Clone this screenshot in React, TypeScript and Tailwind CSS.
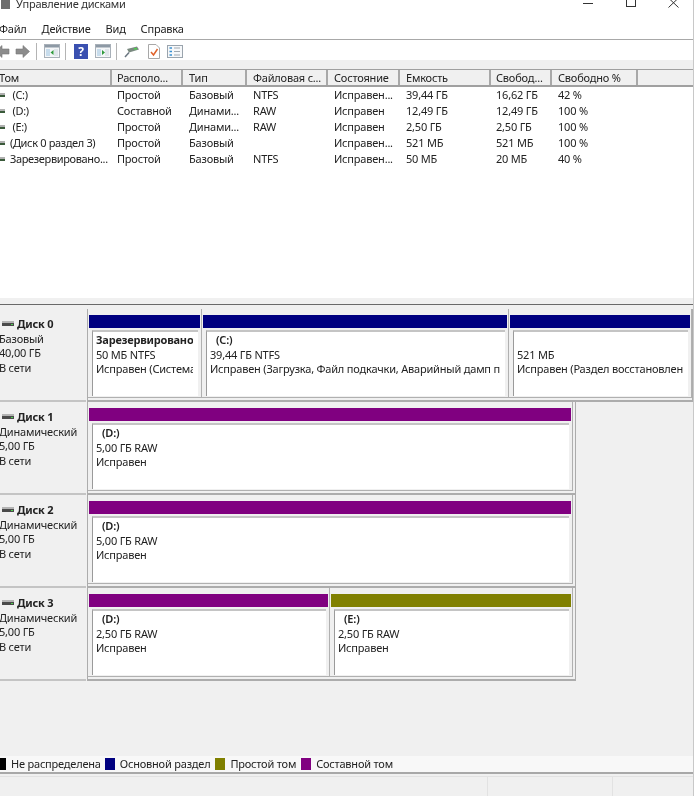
import type { ReactNode } from "react";

const cols = [
  { title: "Том", w: "w-[112px]", pad: "-indent-[1px]" },
  { title: "Располо...", w: "w-[71px]", pad: "pl-[5px]" },
  { title: "Тип", w: "w-[64px]", pad: "pl-[6px]" },
  { title: "Файловая с...", w: "w-[81px]", pad: "pl-[6px]" },
  { title: "Состояние", w: "w-[72px]", pad: "pl-[6px]" },
  { title: "Емкость", w: "w-[91px]", pad: "pl-[6px]" },
  { title: "Свобод...", w: "w-[61px]", pad: "pl-[5px]" },
  { title: "Свободно %", w: "w-[86px]", pad: "pl-[6px]" },
];

const volumes = [
  [" (C:)", "Простой", "Базовый", "NTFS", "Исправен...", "39,44 ГБ", "16,62 ГБ", "42 %"],
  [" (D:)", "Составной", "Динами...", "RAW", "Исправен", "12,49 ГБ", "12,49 ГБ", "100 %"],
  [" (E:)", "Простой", "Динами...", "RAW", "Исправен", "2,50 ГБ", "2,50 ГБ", "100 %"],
  ["(Диск 0 раздел 3)", "Простой", "Базовый", "", "Исправен...", "521 МБ", "521 МБ", "100 %"],
  ["Зарезервировано...", "Простой", "Базовый", "NTFS", "Исправен...", "50 МБ", "20 МБ", "40 %"],
];

type Part = { w: string; bar: string; name?: string; bold?: boolean; size: string; status: string };

const disks: { name: string; kind: string; size: string; width: string; parts: Part[] }[] = [
  {
    name: "Диск 0",
    kind: "Базовый",
    size: "40,00 ГБ",
    width: "w-[606px]",
    parts: [
      { w: "w-[114px]", bar: "bg-[#000080]", name: "Зарезервировано", bold: true, size: "50 МБ NTFS", status: "Исправен (Система" },
      { w: "w-[307px]", bar: "bg-[#000080]", name: "(C:)", size: "39,44 ГБ NTFS", status: "Исправен (Загрузка, Файл подкачки, Аварийный дамп п" },
      { w: "w-[183px]", bar: "bg-[#000080]", size: "521 МБ", status: "Исправен (Раздел восстановлен" },
    ],
  },
  {
    name: "Диск 1",
    kind: "Динамический",
    size: "5,00 ГБ",
    width: "w-[489px]",
    parts: [{ w: "w-[485px]", bar: "bg-[#800080]", name: "(D:)", size: "5,00 ГБ RAW", status: "Исправен" }],
  },
  {
    name: "Диск 2",
    kind: "Динамический",
    size: "5,00 ГБ",
    width: "w-[489px]",
    parts: [{ w: "w-[485px]", bar: "bg-[#800080]", name: "(D:)", size: "5,00 ГБ RAW", status: "Исправен" }],
  },
  {
    name: "Диск 3",
    kind: "Динамический",
    size: "5,00 ГБ",
    width: "w-[489px]",
    parts: [
      { w: "w-[242px]", bar: "bg-[#800080]", name: "(D:)", size: "2,50 ГБ RAW", status: "Исправен" },
      { w: "w-[243px]", bar: "bg-[#808000]", name: "(E:)", size: "2,50 ГБ RAW", status: "Исправен" },
    ],
  },
];

const legend = [
  { label: "Не распределена", color: "bg-black", ml: "-ml-[4px]" },
  { label: "Основной раздел", color: "bg-[#000080]", ml: "ml-[4px]" },
  { label: "Простой том", color: "bg-[#808000]", ml: "ml-[5px]" },
  { label: "Составной том", color: "bg-[#800080]", ml: "ml-[5px]" },
];

function DriveIcon() {
  return (
    <svg width="12" height="8" viewBox="0 0 12 8" className="shrink-0">
      <rect x="0" y="1" width="12" height="2" fill="#b4b4b4" />
      <rect x="0" y="3" width="12" height="3" fill="#4a4a4a" />
      <rect x="9" y="4" width="2" height="1" fill="#4fd04f" />
    </svg>
  );
}

function Win({ green, className }: { green?: boolean; className: string }) {
  return (
    <svg width="16" height="14" viewBox="0 0 16 14" className={`shrink-0 ${className}`}>
      <rect x="0.5" y="0.5" width="15" height="13" fill="#f4f6f8" stroke="#a8b0b8" />
      <rect x="1" y="1" width="14" height="2.5" fill="#8d99a5" />
      <rect x="2" y="5" width="4" height="7" fill="#c7dcec" />
      <rect x="10" y="5" width="4" height="7" fill="#dfe5ea" />
      <path d={green ? "M7 6 L10 8.5 L7 11 Z" : "M9.5 6 L6.5 8.5 L9.5 11 Z"} fill="#2f9a3c" />
    </svg>
  );
}

function Arrow({ flip }: { flip?: boolean }) {
  return (
    <svg width="15" height="13" viewBox="0 0 15 13" className={flip ? "shrink-0 -scale-x-100" : "shrink-0 ml-[5px]"}>
      <path d="M1 4 H8 V0.5 L14.5 6.5 L8 12.5 V9 H1 Z" fill="#8c8c8c" stroke="#777777" strokeWidth="0.6" />
    </svg>
  );
}

function Sep({ className }: { className: string }) {
  return <div className={`w-px h-[17px] bg-[#b4b4b4] shrink-0 ${className}`} />;
}

function Partition({ p }: { p: Part }) {
  return (
    <div className={`${p.w} shrink-0 h-[89px] flex flex-col border-r border-b border-[#b0b0b0]`}>
      <div className={`${p.bar} h-[13px] mt-[6px] mx-px shrink-0`} />
      <div className="mt-[2px] ml-[4px] mr-[3px] h-[66px] bg-white border-l border-t-2 border-l-[#9a9a9a] border-t-[#c4c4c4]">
        <div className="ml-[3px] mr-[5px] pt-[1px] whitespace-nowrap leading-[14.5px] overflow-hidden">
          <div className={`h-[14.5px] ${p.bold ? "font-bold" : "pl-[6px] font-semibold"}`}>{p.name ?? ""}</div>
          <div>{p.size}</div>
          <div>{p.status}</div>
        </div>
      </div>
    </div>
  );
}

function Cell({ children, className }: { children: ReactNode; className?: string }) {
  return <div className={`h-4 leading-4 whitespace-nowrap shrink-0 ${className ?? ""}`}>{children}</div>;
}

export default function App() {
  return (
    <div className="w-[696px] h-[796px] overflow-hidden bg-white text-[11px] tracking-[-0.2px] text-[#222222] blur-[0.3px] font-['Noto_Sans',sans-serif]">
      <div className="w-[694px] h-full bg-[#f0f0f0] border-r border-[#c8c8c8] flex flex-col">
        {/* title */}
        <div className="h-[20px] bg-white flex items-start shrink-0 overflow-hidden">
          <div className="flex items-center gap-[6px] -mt-[4px] h-4 pl-[1px] text-[#333333]">
            <div className="w-[9px] h-[10px] bg-[#6d6d6d] shrink-0" />
            <span>Управление дисками</span>
          </div>
          <div className="ml-auto flex items-start">
            <div className="w-[10px] h-px bg-[#333333] mt-[3px] mr-[33px]" />
            <div className="w-[10px] h-[7px] border border-t-0 border-[#333333] mr-[32px]" />
            <svg width="11" height="8" viewBox="0 0 11 8" className="mr-[14px]">
              <path d="M0.5 -2 L10.5 7.5 M10.5 -2 L0.5 7.5" stroke="#333333" fill="none" />
            </svg>
          </div>
        </div>
        {/* menu */}
        <div className="h-[20px] bg-white border-b border-[#a8a8a8] flex items-start shrink-0 -ml-[1px]">
          <div className="flex pt-[1px] h-4 leading-4 gap-[15px]">
            <span>Файл</span>
            <span>Действие</span>
            <span>Вид</span>
            <span>Справка</span>
          </div>
        </div>
        {/* toolbar */}
        <div className="h-[20px] pt-[2px] bg-white flex items-center shrink-0 -ml-[5px]">
          <Arrow flip />
          <Arrow />
          <Sep className="ml-[6px]" />
          <Win className="ml-[7px]" />
          <Sep className="ml-[5px]" />
          <div className="w-[14px] h-[15px] ml-[8px] bg-[#3a50b0] text-white font-bold text-[12px] leading-[15px] text-center shrink-0">?</div>
          <Win green className="ml-[7px]" />
          <Sep className="ml-[5px]" />
          <svg width="15" height="14" viewBox="0 0 15 14" className="shrink-0 ml-[7px]">
            <path d="M3 5 L13 2.5 L15 5.5 L5 8.5 Z" fill="#7a8a80" />
            <rect x="10" y="4" width="3" height="1.5" fill="#50d050" />
            <path d="M5 8.5 L1 13" stroke="#6a7680" strokeWidth="1.5" />
          </svg>
          <svg width="12" height="15" viewBox="0 0 12 15" className="shrink-0 ml-[9px]">
            <path d="M0.5 0.5 H8 L11.5 4 V14.5 H0.5 Z" fill="#ffffff" stroke="#a8a8a8" />
            <path d="M3 8 L5.5 11 L9.5 5" stroke="#e0622a" strokeWidth="1.5" fill="none" />
          </svg>
          <svg width="16" height="13" viewBox="0 0 16 13" className="shrink-0 ml-[7px]">
            <rect x="0.5" y="0.5" width="15" height="12" fill="#f6f8fa" stroke="#9aa4ad" />
            <path d="M2.5 3 H5 M2.5 6.5 H5 M2.5 10 H5" stroke="#3a8fd0" strokeWidth="1.5" />
            <path d="M7 3 H13 M7 6.5 H13 M7 10 H13" stroke="#a0a8b0" />
          </svg>
        </div>
        <div className="h-[9px] shrink-0" />
        {/* volume list */}
        <div className="h-[229px] shrink-0 bg-white">
          <div className="h-[18px] bg-[#f0f0f0] border-t border-b-2 border-[#a0a0a0] flex overflow-hidden">
            {cols.map((c) => (
              <div key={c.title} className={`${c.w} ${c.pad} shrink-0 h-full border-r-2 border-[#a8a8a8] leading-[16px] whitespace-nowrap`}>
                {c.title}
              </div>
            ))}
          </div>
          <div>
            {volumes.map((v) => (
              <div key={v[0]} className="flex h-4">
                <div className="w-[113px] shrink-0 flex items-center gap-[5px] -ml-[1px]">
                  <svg width="6" height="5" viewBox="0 0 6 5" className="shrink-0">
                    <rect x="0" y="0" width="6" height="2" fill="#b0b0b0" />
                    <rect x="0" y="2" width="6" height="2" fill="#3a5a3a" />
                  </svg>
                  <span className="whitespace-pre tracking-[-0.35px]">{v[0]}</span>
                </div>
                <Cell className="w-[71px] pl-[5px]">{v[1]}</Cell>
                <Cell className="w-[64px] pl-[6px]">{v[2]}</Cell>
                <Cell className="w-[81px] pl-[6px]">{v[3]}</Cell>
                <Cell className="w-[72px] pl-[6px]">{v[4]}</Cell>
                <Cell className="w-[91px] pl-[6px]">{v[5]}</Cell>
                <Cell className="w-[61px] pl-[5px]">{v[6]}</Cell>
                <Cell className="w-[86px] pl-[6px]">{v[7]}</Cell>
              </div>
            ))}
          </div>
        </div>
        {/* splitter */}
        <div className="h-[7px] shrink-0 border-b border-[#696969]" />
        <div className="h-[4px] shrink-0" />
        {/* disks */}
        <div className="shrink-0">
          {disks.map((d) => (
            <div key={d.name} className="flex h-[93px]">
              <div className="w-[87px] shrink-0 bg-[#f0f0f0] border-b-2 border-[#c4c4c4] -ml-px pt-[8px] leading-[14.5px] whitespace-nowrap">
                <div className="flex items-center gap-[3px] pl-[3px] font-bold h-[14.5px]">
                  <DriveIcon />
                  <span>{d.name}</span>
                </div>
                <div>{d.kind}</div>
                <div>{d.size}</div>
                <div>В сети</div>
              </div>
              <div className={`${d.width} ml-px shrink-0 flex border-l border-r border-b-2 border-[#acacac]`}>
                {d.parts.map((p, i) => (
                  <Partition key={i} p={p} />
                ))}
              </div>
            </div>
          ))}
        </div>
        <div className="flex-1" />
        {/* legend */}
        <div className="h-[18px] shrink-0 bg-[#f8f8f8] border-b-2 border-[#a8a8a8] flex items-center">
          {legend.map((l) => (
            <div key={l.label} className={`flex items-center gap-[5px] ${l.ml}`}>
              <div className={`w-[10px] h-3 ${l.color}`} />
              <span>{l.label}</span>
            </div>
          ))}
        </div>
        {/* status bar */}
        <div className="h-[20px] shrink-0 mt-[2px] border-t border-[#e2e2e2] flex">
          <div className="w-[488px] border-r border-[#e2e2e2]" />
          <div className="w-[125px] border-r border-[#e2e2e2]" />
        </div>
      </div>
    </div>
  );
}
